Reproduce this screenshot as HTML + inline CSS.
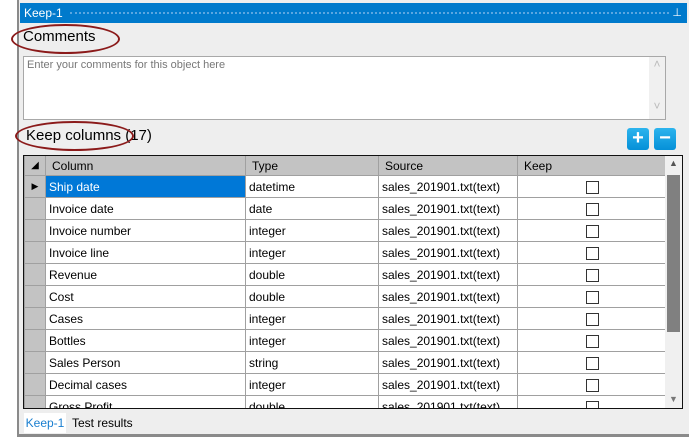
<!DOCTYPE html><html><head><style>
body{margin:0;width:689px;height:437px;background:#fff;font-family:"Liberation Sans",sans-serif;position:relative;overflow:hidden}
.a{position:absolute}
.frame{left:17px;top:0;width:672px;height:437px;background:#eeeeee;border-left:2px solid #8a8a8a;border-bottom:3px solid #8a8a8a;box-sizing:border-box}
.title{left:20px;top:3px;width:667px;height:20px;background:#007acc;color:#fff;font-size:12px;line-height:20px}
table{border-collapse:collapse;font-size:12px;table-layout:fixed}
td{border:1px solid #a0a0a0;height:21px;padding:0 0 0 3px;white-space:nowrap;overflow:hidden}
th{background:#c3c3c3;border:1px solid #a0a0a0;border-top:0;font-weight:normal;text-align:left;height:19px;padding:0 0 0 6px}
td.rh{background:#c3c3c3;padding:0}
td.k{text-align:center;padding:0}
.cb{display:inline-block;width:11px;height:11px;border:1px solid #333;background:#fff;vertical-align:middle}
.btn{width:22px;height:22px;border-radius:3px;background:linear-gradient(#2cb4ee,#0590d8);color:#fff;font-weight:bold;text-align:center;font-size:20px;line-height:21px}
</style></head><body>
<div class="a frame"></div>
<div class="a title"><span style="padding-left:4px">Keep-1</span><span class="a" style="left:50px;right:18px;top:9px;border-top:2px dotted #5aa6e0"></span><span class="a" style="right:5px;top:0;font-size:11px">⊥</span></div>
<div class="a" style="left:23px;top:28px;font-size:15px">Comments</div>
<div class="a" style="left:11px;top:24px;width:105px;height:26px;border:2px solid #8b1a1a;border-radius:50%"></div>
<div class="a" style="left:23px;top:56px;width:643px;height:64px;background:#fff;border:1px solid #a8a8a8;box-sizing:border-box;font-size:11px;color:#777;padding:2px 3px">Enter your comments for this object here
<div class="a" style="right:0;top:0;width:16px;height:62px;background:#f0f0f0;color:#bbb;font-size:12px;text-align:center;line-height:14px">˄<br><br><br>˅</div></div>
<div class="a" style="left:26px;top:127px;font-size:15px">Keep columns (17)</div>
<div class="a" style="left:15px;top:121px;width:115px;height:26px;border:2px solid #8b1a1a;border-radius:50%"></div>
<div class="a btn" style="left:627px;top:128px">+</div>
<div class="a btn" style="left:654px;top:128px">−</div>
<div class="a" style="left:23px;top:155px;width:660px;height:254px;border:1px solid #111;box-sizing:border-box;background:#fff;overflow:hidden">
<table style="width:642px"><colgroup><col style="width:21px"><col style="width:200px"><col style="width:133px"><col style="width:139px"><col style="width:149px"></colgroup>
<tr><th style="padding:0;font-size:10px;text-align:center">◢</th><th>Column</th><th>Type</th><th>Source</th><th>Keep</th></tr>
<tr><td class="rh" style="font-size:9px;text-align:center">▶</td><td style="background:#0078d7;color:#fff">Ship date</td><td>datetime</td><td>sales_201901.txt(text)</td><td class="k"><span class="cb"></span></td></tr>
<tr><td class="rh"></td><td>Invoice date</td><td>date</td><td>sales_201901.txt(text)</td><td class="k"><span class="cb"></span></td></tr>
<tr><td class="rh"></td><td>Invoice number</td><td>integer</td><td>sales_201901.txt(text)</td><td class="k"><span class="cb"></span></td></tr>
<tr><td class="rh"></td><td>Invoice line</td><td>integer</td><td>sales_201901.txt(text)</td><td class="k"><span class="cb"></span></td></tr>
<tr><td class="rh"></td><td>Revenue</td><td>double</td><td>sales_201901.txt(text)</td><td class="k"><span class="cb"></span></td></tr>
<tr><td class="rh"></td><td>Cost</td><td>double</td><td>sales_201901.txt(text)</td><td class="k"><span class="cb"></span></td></tr>
<tr><td class="rh"></td><td>Cases</td><td>integer</td><td>sales_201901.txt(text)</td><td class="k"><span class="cb"></span></td></tr>
<tr><td class="rh"></td><td>Bottles</td><td>integer</td><td>sales_201901.txt(text)</td><td class="k"><span class="cb"></span></td></tr>
<tr><td class="rh"></td><td>Sales Person</td><td>string</td><td>sales_201901.txt(text)</td><td class="k"><span class="cb"></span></td></tr>
<tr><td class="rh"></td><td>Decimal cases</td><td>integer</td><td>sales_201901.txt(text)</td><td class="k"><span class="cb"></span></td></tr>
<tr><td class="rh"></td><td>Gross Profit</td><td>double</td><td>sales_201901.txt(text)</td><td class="k"><span class="cb"></span></td></tr>
</table>
<div class="a" style="left:641px;top:0;width:17px;height:252px;background:#f0f0f0">
<div class="a" style="left:4px;top:2px;font-size:9px;color:#555">▲</div>
<div class="a" style="left:2px;top:19px;width:13px;height:157px;background:#808080"></div>
<div class="a" style="left:4px;top:238px;font-size:9px;color:#777">▼</div></div>
</div>
<div class="a" style="left:24px;top:413px;width:42px;height:20px;background:#fff;color:#1a7fd0;font-size:12px;line-height:20px;text-align:center">Keep-1</div>
<div class="a" style="left:72px;top:413px;font-size:12px;line-height:20px">Test results</div>
</body></html>
